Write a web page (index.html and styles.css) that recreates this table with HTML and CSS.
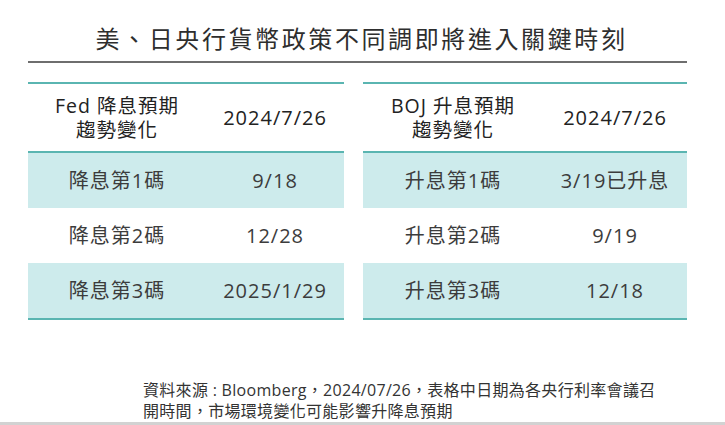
FILE: index.html
```html
<!DOCTYPE html>
<html lang="zh-Hant">
<head>
<meta charset="utf-8">
<title>美、日央行貨幣政策不同調即將進入關鍵時刻</title>
<link rel="stylesheet" href="styles.css">
</head>
<body>
<div class="page">
  <div class="main">
    <h1 class="title">美、日央行貨幣政策不同調即將進入關鍵時刻</h1>
    <div class="rule"></div>
    <div class="tables">
      <table class="rate left">
        <colgroup><col class="c1"><col class="c2"></colgroup>
        <thead>
          <tr><th><span class="hl">Fed 降息預期</span><span class="hl">趨勢變化</span></th><th>2024/7/26</th></tr>
        </thead>
        <tbody>
          <tr class="band"><td>降息第1碼</td><td>9/18</td></tr>
          <tr><td>降息第2碼</td><td>12/28</td></tr>
          <tr class="band"><td>降息第3碼</td><td>2025/1/29</td></tr>
        </tbody>
      </table>
      <table class="rate right">
        <colgroup><col class="c1"><col class="c2"></colgroup>
        <thead>
          <tr><th><span class="hl">BOJ 升息預期</span><span class="hl">趨勢變化</span></th><th>2024/7/26</th></tr>
        </thead>
        <tbody>
          <tr class="band"><td>升息第1碼</td><td>3/19已升息</td></tr>
          <tr><td>升息第2碼</td><td>9/19</td></tr>
          <tr class="band"><td>升息第3碼</td><td>12/18</td></tr>
        </tbody>
      </table>
    </div>
  </div>
  <p class="note">資料來源 : Bloomberg，2024/07/26，表格中日期為各央行利率會議召<br>開時間，市場環境變化可能影響升降息預期</p>
  <div class="bottom-line"></div>
</div>
</body>
</html>
```

FILE: styles.css
```css
html, body {
  margin: 0;
  padding: 0;
  background: #ffffff;
}

body {
  font-family: "Open Sans", "Noto Sans CJK TC", "Noto Sans", sans-serif;
  color: #333333;
}

.page {
  width: 725px;
  height: 425px;
  display: flex;
  flex-direction: column;
  overflow: hidden;
}

.main {
  margin: 0 38px 0 28px;
  padding-top: 23px;
}

.title {
  margin: 0;
  padding-left: 8px;
  font-family: "Noto Sans CJK TC", sans-serif;
  font-size: 24px;
  font-weight: 400;
  line-height: 30px;
  letter-spacing: 2.6px;
  text-align: center;
  color: #2e2e2e;
}

.rule {
  height: 2px;
  background: #6e6e6e;
  margin-top: 8px;
}

.tables {
  display: flex;
  gap: 19px;
  margin-top: 19px;
}

.rate {
  border-collapse: collapse;
  table-layout: fixed;
  border-top: 2px solid #5ab5b1;
  border-bottom: 2px solid #5ab5b1;
  font-size: 20px;
  letter-spacing: 1px;
}

.rate.left { width: 316px; }
.rate.right { width: 324px; }

.rate.left .c1 { width: 178px; }
.rate.left .c2 { width: 138px; }
.rate.right .c1 { width: 180px; }
.rate.right .c2 { width: 144px; }

.rate th {
  height: 67px;
  padding: 0;
  font-weight: 400;
  line-height: 24px;
  text-align: center;
  vertical-align: middle;
  color: #222222;
  border-bottom: 2px solid #5ab5b1;
}

.rate th .hl {
  display: block;
  height: 24px;
  line-height: 24px;
  font-size: 19.5px;
}

.rate td {
  height: 55px;
  padding: 0;
  line-height: 24px;
  text-align: center;
  vertical-align: middle;
  color: #3c3c3c;
}

.rate tr.band td {
  background: #cdebec;
}

.note {
  margin: 60px 0 0 143px;
  font-family: "Open Sans", "Noto Sans CJK TC", sans-serif;
  font-size: 16px;
  line-height: 21px;
  letter-spacing: 0.3px;
  color: #333333;
}

.bottom-line {
  margin-top: auto;
  height: 3px;
  background: #d2d2d2;
}
```
